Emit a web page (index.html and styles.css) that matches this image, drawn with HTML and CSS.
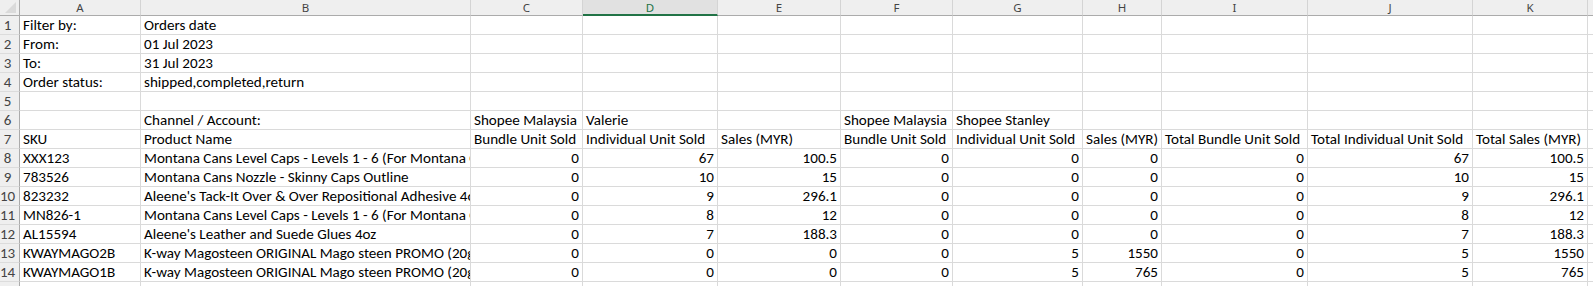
FILE: index.html
```html
<!DOCTYPE html>
<html>
<head>
<meta charset="utf-8">
<link rel="stylesheet" href="styles.css">
</head>
<body>
<table class="sheet">
  <colgroup>
    <col class="w-rn"><col class="w-a"><col class="w-b"><col class="w-c"><col class="w-d"><col class="w-e"><col class="w-f"><col class="w-g"><col class="w-h"><col class="w-i"><col class="w-j"><col class="w-k"><col class="w-rest">
  </colgroup>
  <thead>
    <tr class="hdr">
      <th class="corner"><span class="tri"></span></th>
      <th>A</th><th>B</th><th>C</th><th class="sel">D</th><th>E</th><th>F</th><th>G</th><th>H</th><th>I</th><th>J</th><th>K</th><th class="rest"></th>
    </tr>
  </thead>
  <tbody>
    <tr><td class="rn">1</td><td>Filter by:</td><td>Orders date</td><td></td><td></td><td></td><td></td><td></td><td></td><td></td><td></td><td></td><td class="rest"></td></tr>
    <tr><td class="rn">2</td><td>From:</td><td>01 Jul 2023</td><td></td><td></td><td></td><td></td><td></td><td></td><td></td><td></td><td></td><td class="rest"></td></tr>
    <tr><td class="rn">3</td><td>To:</td><td>31 Jul 2023</td><td></td><td></td><td></td><td></td><td></td><td></td><td></td><td></td><td></td><td class="rest"></td></tr>
    <tr><td class="rn">4</td><td>Order status:</td><td>shipped,completed,return</td><td></td><td></td><td></td><td></td><td></td><td></td><td></td><td></td><td></td><td class="rest"></td></tr>
    <tr><td class="rn">5</td><td></td><td></td><td></td><td></td><td></td><td></td><td></td><td></td><td></td><td></td><td></td><td class="rest"></td></tr>
    <tr><td class="rn">6</td><td></td><td>Channel / Account:</td><td>Shopee Malaysia</td><td>Valerie</td><td></td><td>Shopee Malaysia</td><td>Shopee Stanley</td><td></td><td></td><td></td><td></td><td class="rest"></td></tr>
    <tr><td class="rn">7</td><td>SKU</td><td>Product Name</td><td>Bundle Unit Sold</td><td>Individual Unit Sold</td><td>Sales (MYR)</td><td>Bundle Unit Sold</td><td>Individual Unit Sold</td><td>Sales (MYR)</td><td>Total Bundle Unit Sold</td><td>Total Individual Unit Sold</td><td>Total Sales (MYR)</td><td class="rest"></td></tr>
    <tr><td class="rn">8</td><td>XXX123</td><td>Montana Cans Level Caps - Levels 1 - 6 (For Montana Cans)</td><td class="n">0</td><td class="n">67</td><td class="n">100.5</td><td class="n">0</td><td class="n">0</td><td class="n">0</td><td class="n">0</td><td class="n">67</td><td class="n">100.5</td><td class="rest"></td></tr>
    <tr><td class="rn">9</td><td>783526</td><td>Montana Cans Nozzle - Skinny Caps Outline</td><td class="n">0</td><td class="n">10</td><td class="n">15</td><td class="n">0</td><td class="n">0</td><td class="n">0</td><td class="n">0</td><td class="n">10</td><td class="n">15</td><td class="rest"></td></tr>
    <tr><td class="rn">10</td><td>823232</td><td>Aleene's Tack-It Over &amp; Over Repositional Adhesive 4oz</td><td class="n">0</td><td class="n">9</td><td class="n">296.1</td><td class="n">0</td><td class="n">0</td><td class="n">0</td><td class="n">0</td><td class="n">9</td><td class="n">296.1</td><td class="rest"></td></tr>
    <tr><td class="rn">11</td><td>MN826-1</td><td>Montana Cans Level Caps - Levels 1 - 6 (For Montana Cans)</td><td class="n">0</td><td class="n">8</td><td class="n">12</td><td class="n">0</td><td class="n">0</td><td class="n">0</td><td class="n">0</td><td class="n">8</td><td class="n">12</td><td class="rest"></td></tr>
    <tr><td class="rn">12</td><td>AL15594</td><td>Aleene's Leather and Suede Glues 4oz</td><td class="n">0</td><td class="n">7</td><td class="n">188.3</td><td class="n">0</td><td class="n">0</td><td class="n">0</td><td class="n">0</td><td class="n">7</td><td class="n">188.3</td><td class="rest"></td></tr>
    <tr><td class="rn">13</td><td>KWAYMAGO2B</td><td>K-way Magosteen ORIGINAL Mago steen PROMO (20g x 2)</td><td class="n">0</td><td class="n">0</td><td class="n">0</td><td class="n">0</td><td class="n">5</td><td class="n">1550</td><td class="n">0</td><td class="n">5</td><td class="n">1550</td><td class="rest"></td></tr>
    <tr><td class="rn">14</td><td>KWAYMAGO1B</td><td>K-way Magosteen ORIGINAL Mago steen PROMO (20g x 1)</td><td class="n">0</td><td class="n">0</td><td class="n">0</td><td class="n">0</td><td class="n">5</td><td class="n">765</td><td class="n">0</td><td class="n">5</td><td class="n">765</td><td class="rest"></td></tr>
    <tr><td class="rn">15</td><td></td><td></td><td></td><td></td><td></td><td></td><td></td><td></td><td></td><td></td><td></td><td class="rest"></td></tr>
  </tbody>
</table>
</body>
</html>
```

FILE: styles.css
```css
html, body {
  margin: 0;
  padding: 0;
  background: #ffffff;
  overflow: hidden;
}

.sheet {
  table-layout: fixed;
  border-collapse: separate;
  border-spacing: 0;
  width: 1593px;
  font-family: Carlito, Calibri, "Liberation Sans", sans-serif;
  font-size: 15.1px;
  color: #000;
}

.w-rn { width: 20px; }
.w-a { width: 121px; }
.w-b { width: 330px; }
.w-c { width: 112px; }
.w-d { width: 135px; }
.w-e { width: 123px; }
.w-f { width: 112px; }
.w-g { width: 130px; }
.w-h { width: 79px; }
.w-i { width: 146px; }
.w-j { width: 165px; }
.w-k { width: 115px; }
.w-rest { width: 6px; }

.hdr th {
  box-sizing: border-box;
  height: 16px;
  padding: 0;
  background: #efefef;
  border-right: 1px solid #d4d4d4;
  border-bottom: 1px solid #ababab;
  font-family: "Noto Sans", "DejaVu Sans", sans-serif;
  font-weight: normal;
  font-size: 11.5px;
  line-height: 14px;
  color: #444;
  text-align: center;
  vertical-align: middle;
  position: relative;
}

.hdr th.sel {
  background: #e1e1e1;
  color: #217346;
  border-bottom: 2px solid #217346;
  line-height: 13px;
}

.hdr th.corner {
  border-right: 1px solid #ababab;
}

.hdr th.rest {
  border-right: none;
}

.tri {
  position: absolute;
  right: 3px;
  bottom: 2px;
  width: 0;
  height: 0;
  border-left: 11px solid transparent;
  border-bottom: 11px solid #dadada;
}

tbody td {
  box-sizing: border-box;
  height: 19px;
  padding: 0 3px 0 3px;
  border-right: 1px solid #dadada;
  border-bottom: 1px solid #dadada;
  white-space: nowrap;
  overflow: hidden;
  text-overflow: clip;
  vertical-align: bottom;
  line-height: 17px;
}

tbody td.n {
  text-align: right;
  padding-right: 3px;
}

tbody td.rn {
  background: #efefef;
  border-right: 1px solid #ababab;
  border-bottom: 1px solid #dcdcdc;
  padding: 0 4px 0 0;
  text-align: center;
  color: #444;
  font-size: 15px;
}

tbody td.rest {
  border-right: none;
  padding: 0;
}
```
